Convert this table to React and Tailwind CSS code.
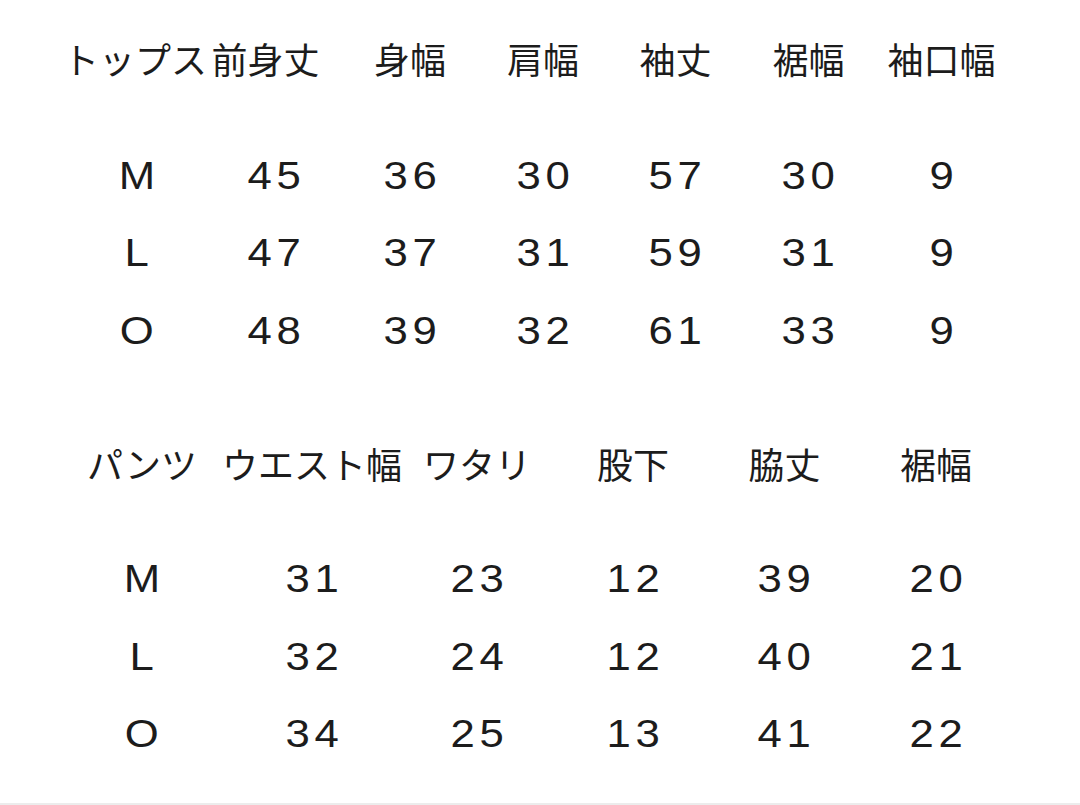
import React from "react";

const jp = { fontFamily: '"Noto Sans CJK JP", "Noto Sans", sans-serif' };
const num = { fontFamily: '"Liberation Sans", Arial, sans-serif' };

const topW = [138, 137, 134, 132, 133, 133, 133];
const topHead = ["トップス", "前身丈", "身幅", "肩幅", "袖丈", "裾幅", "袖口幅"];
const topRows = [
  ["M", "45", "36", "30", "57", "30", "9"],
  ["L", "47", "37", "31", "59", "31", "9"],
  ["O", "48", "39", "32", "61", "33", "9"],
];

const botW = [170, 170, 160, 152, 151, 152];
const botHead = ["パンツ", "ウエスト幅", "ワタリ", "股下", "脇丈", "裾幅"];
const botRows = [
  ["M", "31", "23", "12", "39", "20"],
  ["L", "32", "24", "12", "40", "21"],
  ["O", "34", "25", "13", "41", "22"],
];

function HeadRow({ widths, items, offsets, pl }) {
  return (
    <div className="flex h-[78px] items-center" style={{ paddingLeft: pl }}>
      {items.map((t, i) => (
        <div
          key={i}
          className="flex shrink-0 justify-center whitespace-nowrap text-[36px] leading-none text-[#1c1c1c]"
          style={{ width: widths[i], ...jp }}
        >
          <span style={{ transform: `translateX(${offsets[i] || 0}px)` }}>{t}</span>
        </div>
      ))}
    </div>
  );
}

function DataRow({ widths, items, pl }) {
  return (
    <div className="flex h-[77.5px] items-center" style={{ paddingLeft: pl }}>
      {items.map((t, i) => (
        <div
          key={i}
          className="flex shrink-0 justify-center whitespace-nowrap text-[38px] leading-none text-[#1c1c1c]"
          style={{ width: widths[i], ...num }}
        >
          <span className="inline-block scale-x-[1.15] tracking-[4px] pl-[4px]">{t}</span>
        </div>
      ))}
    </div>
  );
}

export default function App() {
  return (
    <div className="relative h-[805px] w-[1080px] overflow-hidden bg-white">
      <div className="pt-[19px]">
        <HeadRow widths={topW} items={topHead} offsets={[-2, -9, 0, 0, 0, 0, 0]} pl={68} />
        <div className="h-[40px]" />
        {topRows.map((r, i) => (
          <DataRow key={i} widths={topW} items={r} pl={68} />
        ))}
        <div className="h-[54px]" />
        <HeadRow widths={botW} items={botHead} offsets={[0, 0, 0, 0, 0, 0]} pl={57} />
        <div className="h-[39px]" />
        {botRows.map((r, i) => (
          <DataRow key={i} widths={botW} items={r} pl={57} />
        ))}
      </div>
      <div className="absolute bottom-0 left-0 h-[2px] w-full bg-[#ececec]" />
    </div>
  );
}
